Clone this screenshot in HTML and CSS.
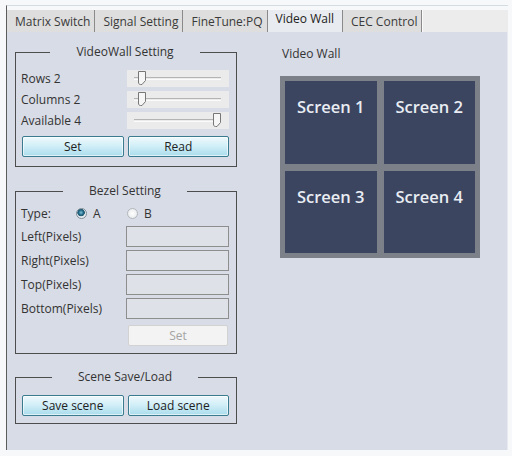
FILE: index.html
```html
<!DOCTYPE html>
<html lang="en">
<head>
    <meta charset="UTF-8">
    <meta name="viewport" content="width=device-width, initial-scale=1.0">
    <title>Video Wall</title>
    <link rel="stylesheet" href="styles.css">
</head>
<body>

    <div class="window">
        <!-- Tab strip -->
        <div class="tabs">
            <div class="tab">Matrix Switch</div>
            <div class="tab">Signal Setting</div>
            <div class="tab">FineTune:PQ</div>
            <div class="tab active">Video Wall</div>
            <div class="tab">CEC Control</div>
        </div>

        <div class="panel">
            <!-- Settings column -->
            <div class="left">
                <fieldset class="group wall-setting">
                    <legend>VideoWall Setting</legend>
                    <div class="row">
                        <span>Rows 2</span>
                        <div class="slider">
                            <div class="track"></div>
                            <svg class="thumb" style="left: 10px" width="10" height="16" viewBox="0 0 10 16"><path d="M1.5 1.5 H8.5 V10.5 L5 14.5 H3.5 C2 14.5 1.5 13.5 1.5 12 Z" fill="#f6f6f6" stroke="#777"/></svg>
                        </div>
                    </div>
                    <div class="row">
                        <span>Columns 2</span>
                        <div class="slider">
                            <div class="track"></div>
                            <svg class="thumb" style="left: 10px" width="10" height="16" viewBox="0 0 10 16"><path d="M1.5 1.5 H8.5 V10.5 L5 14.5 H3.5 C2 14.5 1.5 13.5 1.5 12 Z" fill="#f6f6f6" stroke="#777"/></svg>
                        </div>
                    </div>
                    <div class="row">
                        <span>Available 4</span>
                        <div class="slider">
                            <div class="track"></div>
                            <svg class="thumb" style="left: 85px" width="10" height="16" viewBox="0 0 10 16"><path d="M1.5 1.5 H8.5 V10.5 L5 14.5 H3.5 C2 14.5 1.5 13.5 1.5 12 Z" fill="#f6f6f6" stroke="#777"/></svg>
                        </div>
                    </div>
                    <div class="buttons">
                        <button class="btn">Set</button>
                        <button class="btn">Read</button>
                    </div>
                </fieldset>

                <fieldset class="group bezel">
                    <legend>Bezel Setting</legend>
                    <div class="type-row">
                        <span>Type:</span>
                        <label class="option"><span class="radio checked"></span>A</label>
                        <label class="option"><span class="radio"></span>B</label>
                    </div>
                    <div class="field"><span>Left(Pixels)</span><input class="input" type="text"></div>
                    <div class="field"><span>Right(Pixels)</span><input class="input" type="text"></div>
                    <div class="field"><span>Top(Pixels)</span><input class="input" type="text"></div>
                    <div class="field"><span>Bottom(Pixels)</span><input class="input" type="text"></div>
                    <button class="btn disabled" disabled>Set</button>
                </fieldset>

                <fieldset class="group scene">
                    <legend>Scene Save/Load</legend>
                    <div class="buttons">
                        <button class="btn">Save scene</button>
                        <button class="btn">Load scene</button>
                    </div>
                </fieldset>
            </div>

            <!-- Wall preview -->
            <div class="right">
                <div class="wall-title">Video Wall</div>
                <div class="wall">
                    <div class="screen">Screen 1</div>
                    <div class="screen">Screen 2</div>
                    <div class="screen">Screen 3</div>
                    <div class="screen">Screen 4</div>
                </div>
            </div>
        </div>
    </div>

</body>
</html>
```

FILE: styles.css
```css
* {
    margin: 0;
    padding: 0;
    box-sizing: border-box;
    font-family: "Open Sans", "Noto Sans", sans-serif;
}

body {
    background: #f7f8f9;
    color: #333;
    font-size: 12px;
}

.window {
    margin: 5px 0 0 6px;
    width: 502px;
    height: 445px;
    border-left: 1px solid #5c5c5c;
    border-top: 1px solid #d4dce1;
    display: flex;
    flex-direction: column;
}

/* Tabs */
.tabs {
    margin-top: 4px;
    height: 22px;
    display: flex;
    background: #ececec;
}

.tab {
    padding: 3px 4px 0 8px;
    background: #dedede;
    border-right: 1px solid #8a8a8a;
    box-shadow: 1px 0 0 #fafafa;
    color: #3a3a3a;
    line-height: 17px;
    white-space: nowrap;
}

.tab.active {
    padding: 0 8px 0 8px;
    background: #e8ebef;
    color: #222;
}

/* Main panel */
.panel {
    flex: 1;
    display: flex;
    background: #d8dce6;
    border-right: 1px solid #e8eaef;
    padding: 13px 0 0 8px;
}

.left {
    width: 222px;
}

.group {
    border: 1px solid #4d4d4d;
    padding: 9px 7px 9px 5px;
}

.group legend {
    margin: 0 auto;
    padding: 0 26px;
    line-height: 14px;
    color: #333;
}

.row {
    display: grid;
    grid-template-columns: 1fr 102px;
    align-items: center;
    height: 21px;
}

.slider {
    position: relative;
    height: 17px;
    background: #ebebeb;
    display: flex;
    align-items: center;
    padding: 0 8px 0 7px;
}

.track {
    flex: 1;
    height: 3px;
    border-top: 1px solid #b4b4b4;
    border-bottom: 1px solid #fbfbfb;
}

.thumb {
    position: absolute;
    top: 0;
}

.buttons {
    display: grid;
    grid-template-columns: 1fr 1fr;
    gap: 4px;
    margin: 5px 0 0 1px;
}

.btn {
    height: 21px;
    font-size: 12px;
    color: #222;
    border: 1px solid #3a7b90;
    border-radius: 2px;
    background: linear-gradient(#eef9fc, #d3eff8 45%, #aadcec);
    box-shadow: inset 0 0 0 1px rgba(255, 255, 255, 0.6);
}

.btn.disabled {
    display: block;
    width: 100px;
    margin: 5px 1px 0 auto;
    color: #a4a4a4;
    border-color: #d2d2d2;
    background: #f3f3f3;
    box-shadow: none;
}

.wall-setting {
    margin-bottom: 17px;
}

/* Bezel */
.bezel {
    margin-bottom: 16px;
    padding-top: 4px;
    padding-bottom: 7px;
}

.type-row {
    display: grid;
    grid-template-columns: 55px 51px auto;
    align-items: center;
    height: 22px;
}

.option {
    display: flex;
    align-items: center;
    gap: 6px;
}

.radio {
    width: 11px;
    height: 11px;
    border-radius: 50%;
    border: 1px solid #b3b8bc;
    background: radial-gradient(circle, #ffffff, #e4e6e8);
}

.radio.checked {
    border-color: #7b8d98;
    background: radial-gradient(circle at 45% 40%, #7fc3dc 0, #1d6482 2.5px, #2a5d72 3.5px, #e6ecef 4px);
}

.field {
    display: grid;
    grid-template-columns: 1fr 103px;
    align-items: center;
    height: 24px;
}

.input {
    height: 21px;
    border: 1px solid #8e8e8e;
    background: #dee1e7;
}

.scene {
    padding-top: 6px;
    padding-bottom: 7px;
}

/* Wall preview */
.right {
    margin-left: 43px;
    padding-top: 1px;
}

.wall-title {
    padding-left: 2px;
    line-height: 16px;
    color: #333;
    margin-bottom: 14px;
}

.wall {
    width: 200px;
    height: 182px;
    padding: 5px;
    background: #7c8089;
    display: grid;
    grid-template-columns: 1fr 1fr;
    grid-template-rows: 1fr 1fr;
    gap: 7px;
}

.screen {
    background: #3b4560;
    color: #e9edf3;
    font-size: 16.5px;
    font-weight: 600;
    text-align: center;
    padding-top: 14px;
}
```
